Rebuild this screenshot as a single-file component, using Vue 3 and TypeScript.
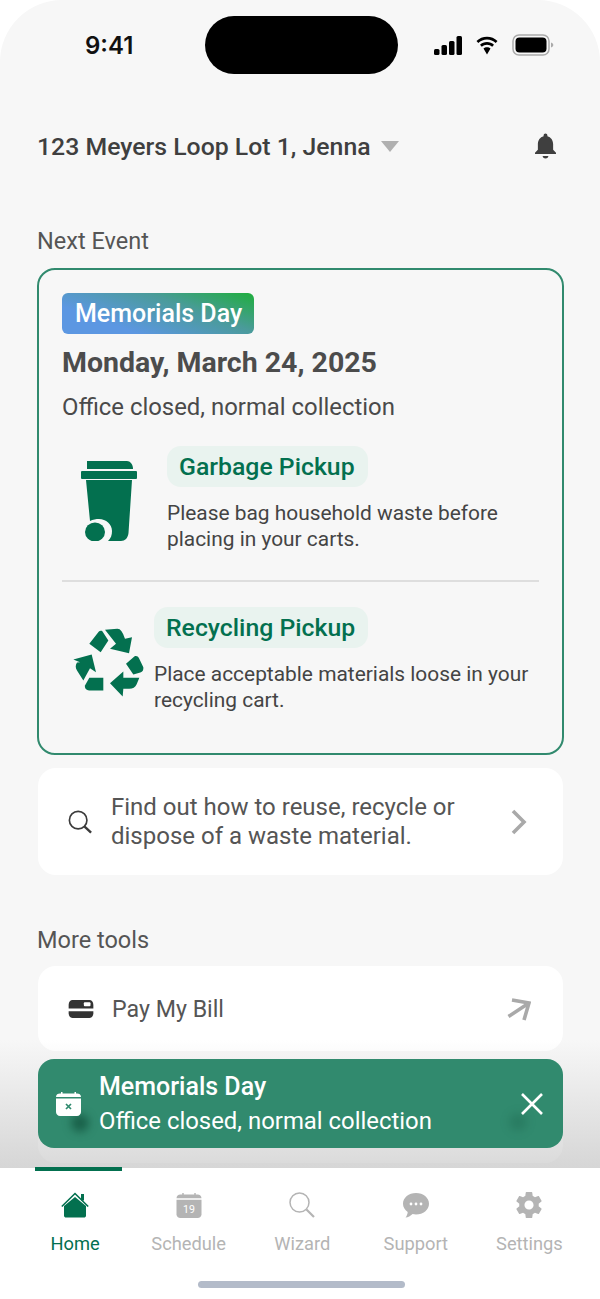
<script setup lang="ts">
interface Tab { label: string; active?: boolean }
const tabs: Tab[] = [
  { label: 'Home', active: true },
  { label: 'Schedule' },
  { label: 'Wizard' },
  { label: 'Support' },
  { label: 'Settings' },
]
</script>

<template>
  <div class="phone">
    <div class="screen">
      <div class="status">
        <span class="time">9:41</span>
        <div class="island"></div>
        <div class="status-icons">
          <svg width="28" height="19" viewBox="0 0 28 19"><rect x="0" y="13" width="5.500" height="6" rx="1.500"/><rect x="7.500" y="9" width="5.500" height="10" rx="1.500"/><rect x="15" y="5" width="5.500" height="14" rx="1.500"/><rect x="22.500" y="0" width="5.500" height="19" rx="1.500"/></svg>
          <svg width="26" height="19" viewBox="1 0 22 19"><path d="M12 3.600c3.300 0 6.400 1.300 8.700 3.400l1.800-2C19.700 2.300 16 .8 12 .8S4.300 2.300 1.500 5l1.800 2C5.600 4.900 8.700 3.600 12 3.600z"/><path d="M12 8.700c2 0 3.800.8 5.200 2l1.800-2C17.100 7 14.700 6 12 6S6.900 7 5 8.700l1.800 2c1.400-1.200 3.200-2 5.200-2z"/><path d="M12 11.200c-1.400 0-2.600.5-3.500 1.400L12 18.500l3.500-5.900c-.9-.9-2.100-1.400-3.500-1.400z"/></svg>
          <svg width="42" height="22" viewBox="0 0 42 22"><rect x="1" y="1" width="36" height="20" rx="6" fill="none" stroke="#aaa" stroke-width="1.500"/><rect x="3.500" y="3.500" width="31" height="15" rx="4"/><path d="M39 8.500c1.500.4 2.300 1.300 2.300 2.500s-.8 2.100-2.300 2.500z" fill="#aaa"/></svg>
        </div>
      </div>

      <main class="content">
        <header class="address">
          <span class="address-text">123 Meyers Loop Lot 1, Jenna</span>
          <span class="caret"></span>
          <svg class="bell" width="21" height="26" viewBox="0 0 22 26"><path d="M11 0c1.100 0 2 .9 2 2v.7c3.700 1 6 4.200 6 8.300v6l3 3v1.500H0V20l3-3v-6c0-4.100 2.300-7.300 6-8.300V2c0-1.100.9-2 2-2z" fill="#3f3f3f"/><path d="M8 23.500h6c0 1.500-1.300 2.500-3 2.500s-3-1-3-2.500z" fill="#3f3f3f"/></svg>
        </header>

        <h2 class="section-title first">Next Event</h2>
        <section class="event-card">
          <span class="holiday-tag">Memorials Day</span>
          <h3 class="event-date">Monday, March 24, 2025</h3>
          <p class="event-note">Office closed, normal collection</p>

          <div class="pickup garbage">
            <svg class="cart" width="56" height="80" viewBox="0 0 56 80" fill="#03704f">
              <path d="M6 0H46C49 0 52 3 52 8H6z"/>
              <rect x="0" y="10" width="56" height="8" rx="1"/>
              <path d="M5 19H51L47.500 72C47 77 44 80 40 80H27C30 77 31 74 31 70C31 63 25 58 18 58C15 58 12 58.500 9 60z"/>
              <ellipse cx="14" cy="71" rx="10" ry="9.500"/>
            </svg>
            <div class="pickup-body">
              <span class="pickup-tag">Garbage Pickup</span>
              <p class="pickup-text">Please bag household waste before<br>placing in your carts.</p>
            </div>
          </div>

          <div class="divider"></div>

          <div class="pickup recycling">
            <svg class="recycle" width="75" height="71" viewBox="120 110 225 212" fill="#03704f">
              <path d="M225 118L262 115C272 115 278 125 285 145L306 140L297 188L240 175L258 160z"/>
              <path d="M178 160L206 124C210 120 216 120 219 125L235 150L212 185z"/>
              <path d="M288 220L313 198C318 195 324 197 327 203L340 230C341 238 338 244 331 246L310 252z"/>
              <path d="M240 278L280 243L280 262H328L320 281C316 290 308 295 298 295H280L278 318z"/>
              <path d="M130 207L185 192L198 245L180 233L160 270L141 240C136 232 136 224 141 216L150 215z"/>
              <path d="M165 285L178 262H220V300H182C170 300 163 294 165 285z"/>
            </svg>
            <div class="pickup-body">
              <span class="pickup-tag">Recycling Pickup</span>
              <p class="pickup-text">Place acceptable materials loose in your<br>recycling cart.</p>
            </div>
          </div>
        </section>

        <button class="row search-row">
          <svg width="24" height="24" viewBox="0 0 26 26" fill="none" stroke="#3b3b3b"><circle cx="11" cy="11" r="9.500" stroke-width="1.800"/><path d="M18 18l7 6.500" stroke-width="2.600"/></svg>
          <span class="row-text">Find out how to reuse, recycle or<br>dispose of a waste material.</span>
          <svg class="chev" width="16" height="26" viewBox="0 0 16 26" fill="none" stroke="#a9a9a9" stroke-width="3.600"><path d="M2 2l11 11L2 24"/></svg>
        </button>

        <h2 class="section-title tools">More tools</h2>
        <div class="row bill-row">
          <svg width="26" height="19" viewBox="0 0 26 20"><path d="M0 6c0-3 2-5 4-5h18c2 0 4 2 4 5v4H0z" fill="#333"/><rect x="16" y="3.500" width="7" height="4" rx="1" fill="#fff"/><path d="M0 13h26v2c0 3-2 5-4 5H4c-2 0-4-2-4-5z" fill="#333"/></svg>
          <span class="row-text bill-text">Pay My Bill</span>
          <svg class="arrow" width="24" height="24" viewBox="0 0 24 24" fill="none" stroke="#a9a9a9" stroke-width="3.600"><path d="M1.500 19.500L22 6M5 3l17 3-5 17"/></svg>
        </div>
        <div class="row hidden-row"></div>

        <div class="fade"></div>
        <div class="toast">
          <span class="ghost ghost-star"></span>
          <span class="ghost ghost-arrow"></span>
          <svg class="toast-cal" width="25" height="24" viewBox="0 0 25 24"><path d="M5 0h1.500v1.500h12V0H20v1.500h1c2.200 0 4 1 4 3.500H0c0-2.500 1.800-3.500 4-3.500h1z" fill="#fff"/><path d="M0 6.500h25V20c0 2.200-1.800 4-4 4H4c-2.200 0-4-1.800-4-4z" fill="#fff"/><path d="M10 12l5 5m0-5l-5 5" stroke="#2f8a6e" stroke-width="1.700"/></svg>
          <div class="toast-text">
            <strong>Memorials Day</strong>
            <span>Office closed, normal collection</span>
          </div>
          <svg class="toast-close" width="22" height="22" viewBox="0 0 22 22" fill="none" stroke="#fff" stroke-width="2.600"><path d="M1 1l20 20M21 1L1 21"/></svg>
        </div>
      </main>

      <nav class="tabbar">
        <div v-for="(tab, i) in tabs" :key="tab.label" class="tab" :class="{ active: tab.active }">
          <div class="tab-icon">
            <svg v-if="i === 0" width="28" height="26" viewBox="0 0 28 26"><path d="M3 14L14 5L25 14V23.500C25 25 24 25.500 23 25.500H5C4 25.500 3 25 3 23.500z" fill="#03704f"/><path d="M.8 14.500L14 1.500L27.200 14.500" fill="none" stroke="#03704f" stroke-width="1.600"/><rect x="20" y="2" width="3" height="6.500" fill="#03704f"/></svg>
            <svg v-else-if="i === 1" width="26" height="25" viewBox="0 0 26 26"><path d="M6 0h1.500v1.500h11V0H20v1.500h2c2.200 0 4 1.500 4 4H0c0-2.500 1.800-4 4-4h2z" fill="#b4b4b4"/><path d="M0 7h26v15c0 2.200-1.800 4-4 4H4c-2.200 0-4-1.800-4-4z" fill="#b4b4b4"/><text x="13" y="21" text-anchor="middle" class="cal-num">19</text></svg>
            <svg v-else-if="i === 2" width="26" height="26" viewBox="0 0 26 26" fill="none" stroke="#b4b4b4"><circle cx="10.500" cy="10.500" r="9.500" stroke-width="1.500"/><path d="M17.500 17.500l7.500 7.500" stroke-width="2.200"/></svg>
            <svg v-else-if="i === 3" width="26" height="25" viewBox="0 0 26 25"><path d="M13 0c7.200 0 13 4.700 13 10.800S20.200 21.500 13 21.500c-1.200 0-2.300-.1-3.400-.4C7.600 23 5 24.500 2.500 24.500c1.200-1.300 2-3.200 2.200-5.500C1.800 17 0 14.100 0 10.800 0 4.700 5.800 0 13 0z" fill="#b4b4b4"/><circle cx="8" cy="11" r="1.400" fill="#fff"/><circle cx="13" cy="11" r="1.400" fill="#fff"/><circle cx="18" cy="11" r="1.400" fill="#fff"/></svg>
            <svg v-else width="26" height="26" viewBox="2 2 20 20"><path fill="#b4b4b4" d="M19.430 12.980c.04-.32.070-.64.070-.98s-.03-.66-.07-.98l2.110-1.650c.19-.15.240-.42.120-.64l-2-3.460c-.12-.22-.39-.3-.61-.22l-2.490 1c-.52-.4-1.080-.73-1.690-.98l-.38-2.650C14.460 2.180 14.250 2 14 2h-4c-.25 0-.46.180-.49.420l-.38 2.650c-.61.250-1.170.59-1.690.98l-2.490-1c-.23-.09-.49 0-.61.220l-2 3.460c-.13.220-.07.490.12.640l2.110 1.650c-.04.320-.07.650-.07.980s.03.660.07.980l-2.110 1.650c-.19.150-.24.420-.12.640l2 3.460c.12.220.39.300.61.220l2.490-1c.52.400 1.080.730 1.690.980l.38 2.650c.03.240.24.420.49.420h4c.25 0 .46-.18.49-.42l.38-2.650c.61-.25 1.170-.59 1.690-.98l2.490 1c.23.090.49 0 .61-.22l2-3.460c.12-.22.070-.49-.12-.64l-2.110-1.650zM12 15.500c-1.930 0-3.500-1.570-3.500-3.500s1.570-3.500 3.500-3.500 3.500 1.570 3.500 3.500-1.570 3.500-3.500 3.500z"/></svg>
          </div>
          <span>{{ tab.label }}</span>
        </div>
        <div class="home-indicator"></div>
      </nav>
    </div>
  </div>
</template>

<style>
html, body { margin: 0; background: #fff; }
</style>

<style scoped>
.phone {
  width: 600px;
  height: 1299px;
  overflow: hidden;
  background: #fff;
  font-family: Roboto, "Liberation Sans", sans-serif;
}
.screen {
  position: relative;
  display: flex;
  flex-direction: column;
  height: 100%;
  background: #f7f7f7;
  border-radius: 62px 62px 0 0;
  overflow: hidden;
}
.status {
  position: relative;
  flex: none;
  display: flex;
  justify-content: space-between;
  align-items: center;
  height: 90px;
  padding: 0 46px 0 85px;
  box-sizing: border-box;
}
.time {
  font-family: Inter, Roboto, sans-serif;
  font-size: 24px;
  font-weight: 600;
  color: #111;
}
.island {
  position: absolute;
  left: 205px;
  top: 16px;
  width: 193px;
  height: 58px;
  border-radius: 29px;
  background: #000;
}
.status-icons {
  display: flex;
  align-items: center;
  gap: 12px;
  margin-right: 0;
}
.content {
  position: relative;
  flex: 1;
  min-height: 0;
  padding: 0 36.500px 0 37px;
  overflow: hidden;
}
.address {
  display: flex;
  align-items: center;
  height: 34px;
  margin-top: 39px;
  color: #3f3f3f;
}
.address-text {
  font-size: 24.800px;
  font-weight: 500;
}
.caret {
  width: 0;
  height: 0;
  margin-left: 10px;
  border-left: 9px solid transparent;
  border-right: 9px solid transparent;
  border-top: 11px solid #b0b0b0;
}
.bell { margin-left: auto; margin-right: 7.500px; }
.section-title {
  margin: 0;
  font-size: 23.500px;
  font-weight: 400;
  line-height: 30px;
  color: #555;
}
.section-title.first { margin-top: 63px; margin-bottom: 12px; }
.section-title.tools { margin-top: 50px; margin-bottom: 11px; }
.event-card {
  box-sizing: border-box;
  height: 487px;
  padding: 23px 23px 0;
  border: 2px solid #318a6e;
  border-radius: 18px;
}
.holiday-tag {
  display: inline-block;
  padding: 0 12px 0 13px;
  height: 41px;
  line-height: 41px;
  border-radius: 6px;
  color: #fff;
  font-size: 25px;
  font-weight: 500;
  background: linear-gradient(20deg, #5c97e2 25%, #4a9b9a 65%, #1fae3d 100%);
}
.event-date {
  margin: 11px 0 0;
  font-size: 28.500px;
  font-weight: 700;
  line-height: 36px;
  color: #4c4c4c;
}
.event-note {
  margin: 10px 0 0;
  font-size: 23.900px;
  line-height: 32px;
  color: #4a4a4a;
}
.pickup { display: flex; }
.garbage { margin-top: 23px; padding-left: 19px; height: 116px; }
.garbage .cart { margin-top: 15px; margin-right: 30px; flex: none; }
.recycling { margin-top: 25px; padding-left: 8px; }
.recycling .recycle { margin-top: 20px; margin-right: 9px; flex: none; }
.pickup-tag {
  display: inline-block;
  height: 41px;
  line-height: 41px;
  padding: 0 13px 0 12px;
  border-radius: 14px;
  background: #e9f3ef;
  color: #03704f;
  font-size: 24.800px;
  font-weight: 500;
}
.pickup-text {
  margin: 13px 0 0;
  font-size: 20.900px;
  line-height: 26px;
  color: #444;
}
.divider {
  height: 2px;
  margin-top: 18px;
  background: #dedede;
}
.row {
  display: flex;
  align-items: center;
  width: calc(100% - 1px);
  margin-left: .5px;
  box-sizing: border-box;
  border: 0;
  border-radius: 18px;
  background: #fff;
  font-family: inherit;
  text-align: left;
}
.search-row {
  height: 107px;
  margin-top: 13px;
  padding: 0 36px 0 30.500px;
}
.row-text {
  flex: 1;
  margin-left: 19px;
  font-size: 24px;
  line-height: 29px;
  color: #555;
}
.bill-row {
  height: 85px;
  padding: 0 32px 0 30.500px;
}
.bill-text { margin-left: 18px; font-size: 23.200px; padding-top: 2px; }
.hidden-row {
  height: 98px;
  margin-top: 14px;
}
.fade {
  position: absolute;
  left: 0;
  right: 0;
  bottom: 0;
  height: 128px;
  background: linear-gradient(to bottom, rgba(190,190,190,0), rgba(190,190,190,.58));
}
.toast {
  position: absolute;
  left: 37.500px;
  right: 37px;
  bottom: 20px;
  height: 89px;
  box-sizing: border-box;
  display: flex;
  align-items: center;
  padding: 0 20px 0 18.500px;
  border-radius: 16px;
  background: #318a6e;
  color: #fff;
}
.ghost {
  position: absolute;
  width: 18px;
  height: 18px;
  border-radius: 50%;
  filter: blur(4px);
}
.ghost-star { left: 33px; top: 55px; background: rgba(15,80,58,.7); }
.ghost-arrow { right: 36px; top: 54px; background: rgba(20,90,68,.28); }
.toast-cal, .toast-text, .toast-close { position: relative; }
.toast-text {
  flex: 1;
  display: flex;
  flex-direction: column;
  margin-left: 18px;
  font-size: 23.900px;
  line-height: 35px;
}
.toast-text strong { font-size: 25px; font-weight: 500; }
.tabbar {
  position: relative;
  flex: none;
  display: flex;
  height: 131px;
  padding: 0 13.750px 0 18.250px;
  background: #fff;
  box-sizing: border-box;
}
.tab {
  position: relative;
  flex: 1;
  display: flex;
  flex-direction: column;
  align-items: center;
  padding-top: 24px;
  gap: 14px;
  font-size: 18.300px;
  color: #b4b4b4;
}
.tab.active { color: #03704f; }
.tab.active::before {
  content: "";
  position: absolute;
  left: 17px;
  right: 10px;
  top: -1px;
  height: 4px;
  background: #03704f;
}
.tab-icon {
  display: flex;
  align-items: center;
  justify-content: center;
  height: 26px;
}
.tab span { line-height: 24px; }
.cal-num {
  font-family: Roboto, sans-serif;
  font-size: 11px;
  fill: #fff;
}
.home-indicator {
  position: absolute;
  left: 198px;
  top: 113px;
  width: 207px;
  height: 7px;
  border-radius: 4px;
  background: #b3bbc9;
}
</style>
